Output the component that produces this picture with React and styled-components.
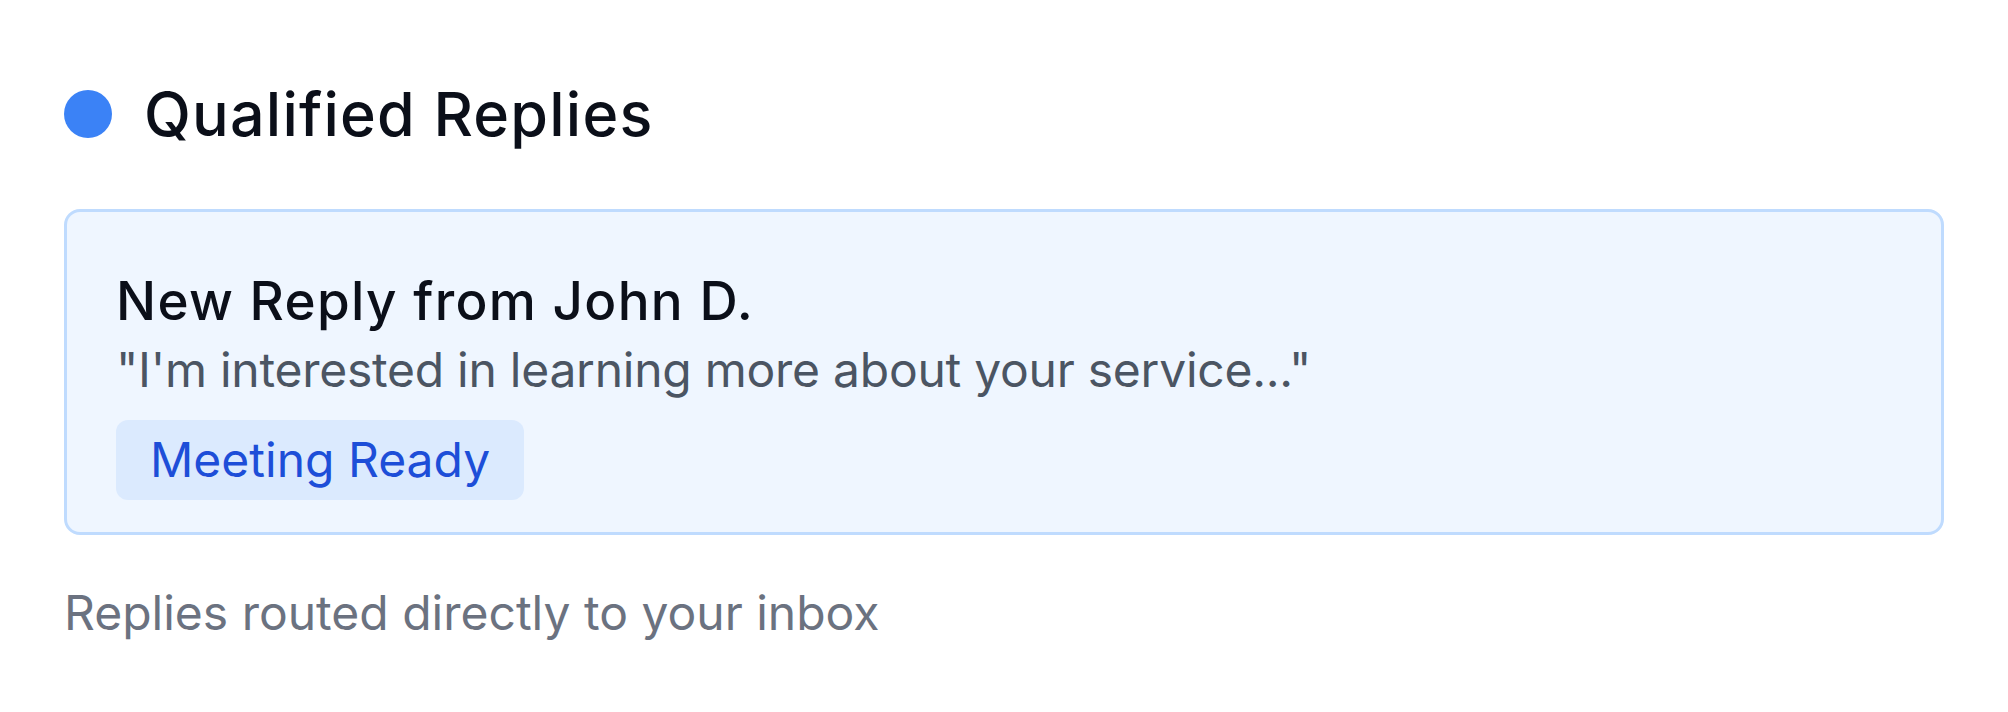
import styled, { createGlobalStyle } from "styled-components";

const GlobalStyle = createGlobalStyle`
  body {
    margin: 0;
    background: #ffffff;
    font-family: Inter, "Noto Sans", "Liberation Sans", sans-serif;
  }
`;

const Page = styled.div`
  padding: 78px 64px 40px;
  display: flex;
  flex-direction: column;
`;

const Header = styled.div`
  display: flex;
  align-items: center;
  gap: 32px;
`;

const Dot = styled.span`
  width: 48px;
  height: 48px;
  border-radius: 50%;
  background: ${(p) => p.color || "#3b82f6"};
  flex-shrink: 0;
`;

const Title = styled.h2`
  margin: 0;
  font-size: 61px;
  line-height: 72px;
  font-weight: 500;
  letter-spacing: 1.2px;
  color: #0b0f19;
`;

const Card = styled.div`
  margin-top: 59px;
  background: #eff6ff;
  border: 3px solid #bfdbfe;
  border-radius: 16px;
  padding: 57px 49px 32px;
  display: flex;
  flex-direction: column;
  align-items: flex-start;
`;

const CardHeading = styled.div`
  font-size: 53px;
  line-height: 64px;
  font-weight: 500;
  letter-spacing: 1.3px;
  color: #0b0f19;
`;

const Quote = styled.div`
  margin-top: 7px;
  font-size: 48px;
  line-height: 60px;
  letter-spacing: -0.25px;
  color: #4b5563;
`;

const Badge = styled.span`
  margin-top: 20px;
  padding: 10px 34px;
  border-radius: 12px;
  background: #dbeafe;
  color: #1d4ed8;
  font-size: 48px;
  line-height: 60px;
`;

const Caption = styled.p`
  margin: 48px 0 0;
  font-size: 48px;
  line-height: 60px;
  color: #6b7280;
`;

export default function App() {
  return (
    <>
      <GlobalStyle />
      <Page>
        <Header>
          <Dot />
          <Title>Qualified Replies</Title>
        </Header>
        <Card>
          <CardHeading>New Reply from John D.</CardHeading>
          <Quote>"I'm interested in learning more about your service..."</Quote>
          <Badge>Meeting Ready</Badge>
        </Card>
        <Caption>Replies routed directly to your inbox</Caption>
      </Page>
    </>
  );
}
